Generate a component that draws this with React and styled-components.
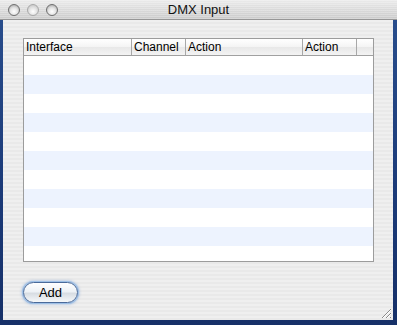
import React from "react";
import styled, { createGlobalStyle } from "styled-components";

const Global = createGlobalStyle`
  html, body { margin: 0; padding: 0; }
  body { font-family: "Liberation Sans", "DejaVu Sans", sans-serif; }
`;

const Screen = styled.div`
  width: 397px;
  height: 325px;
  display: flex;
  flex-direction: column;
  background: linear-gradient(180deg, #2a4f8e 0%, #1b3a78 60%, #163068 100%);
  overflow: hidden;
`;

const TitleBar = styled.div`
  height: 20px;
  flex: none;
  display: flex;
  align-items: center;
  position: relative;
  background: repeating-linear-gradient(180deg, rgba(255,255,255,0.25) 0 1px, rgba(0,0,0,0) 1px 2px),
    linear-gradient(180deg, #ebebeb 0%, #dadada 50%, #cacaca 100%);
  border-bottom: 1px solid #969696;
  box-sizing: border-box;
`;

const Lights = styled.div`
  display: flex;
  gap: 7px;
  padding-left: 8px;
`;

const Light = styled.div`
  width: 12px;
  height: 12px;
  border-radius: 50%;
  box-sizing: border-box;
  border: 1px solid ${(p) => (p.dim ? "#a8a8a8" : "#6f6f6f")};
  background: radial-gradient(circle at 50% 65%, #ffffff 0%, #e4e4e4 45%, ${(p) => (p.dim ? "#bcbcbc" : "#9a9a9a")} 100%);
`;

const Title = styled.div`
  position: absolute;
  left: 0;
  right: 0;
  text-align: center;
  font-size: 13px;
  color: #111;
  pointer-events: none;
`;

const Body = styled.div`
  flex: 1;
  margin: 0 4px 5px 3px;
  padding: 18px 20px 0 20px;
  display: flex;
  flex-direction: column;
  position: relative;
  background: repeating-linear-gradient(180deg, #efefef 0 2px, #e9e9e9 2px 4px);
`;

const Table = styled.div`
  width: 351px;
  height: 224px;
  box-sizing: border-box;
  border: 1px solid #9c9c9c;
  background: #fff;
  overflow: hidden;
`;

const Header = styled.div`
  display: grid;
  grid-template-columns: 108px 54px 117px 54px 1fr;
  height: 16px;
  border-bottom: 1px solid #a0a0a0;
  background: linear-gradient(180deg, #ffffff 0%, #f4f4f4 50%, #e8e8e8 51%, #f3f3f3 100%);
`;

const HeadCell = styled.div`
  font-size: 12px;
  line-height: 16px;
  padding-left: 2px;
  color: #000;
  border-right: ${(p) => (p.last ? "none" : "1px solid #a8a8a8")};
  white-space: nowrap;
  overflow: hidden;
`;

const Row = styled.div`
  height: 19px;
  background: ${(p) => (p.alt ? "#edf3fe" : "#ffffff")};
`;

const Footer = styled.div`
  padding-top: 20px;
  display: flex;
`;

const Button = styled.button`
  width: 55px;
  height: 21px;
  border-radius: 11px;
  border: 1px solid #4a6a9a;
  box-shadow: 0 0 0 1px #9ec0e6, 0 0 3px 1px rgba(90,140,210,0.6);
  background: linear-gradient(180deg, #ffffff 0%, #eef2f6 45%, #d8dde3 55%, #f6f8fa 100%);
  font-family: "Liberation Sans", "DejaVu Sans", sans-serif;
  font-size: 13px;
  color: #000;
  padding: 0;
`;

const Grip = styled.svg`
  position: absolute;
  right: 1px;
  bottom: 1px;
`;

const columns = ["Interface", "Channel", "Action", "Action", ""];

export default function App() {
  return (
    <>
      <Global />
      <Screen>
        <TitleBar>
          <Lights>
            <Light />
            <Light dim />
            <Light />
          </Lights>
          <Title>DMX Input</Title>
        </TitleBar>
        <Body>
          <Table>
            <Header>
              {columns.map((c, i) => (
                <HeadCell key={i} last={i === columns.length - 1}>
                  {c}
                </HeadCell>
              ))}
            </Header>
            {Array.from({ length: 11 }).map((_, i) => (
              <Row key={i} alt={i % 2 === 1} />
            ))}
          </Table>
          <Footer>
            <Button>Add</Button>
          </Footer>
          <Grip width="12" height="12" viewBox="0 0 12 12">
            <path d="M11 2 L2 11 M11 6 L6 11 M11 10 L10 11" stroke="#888" strokeWidth="1" />
            <path d="M11 3 L3 11 M11 7 L7 11" stroke="#fff" strokeWidth="1" />
          </Grip>
        </Body>
      </Screen>
    </>
  );
}
